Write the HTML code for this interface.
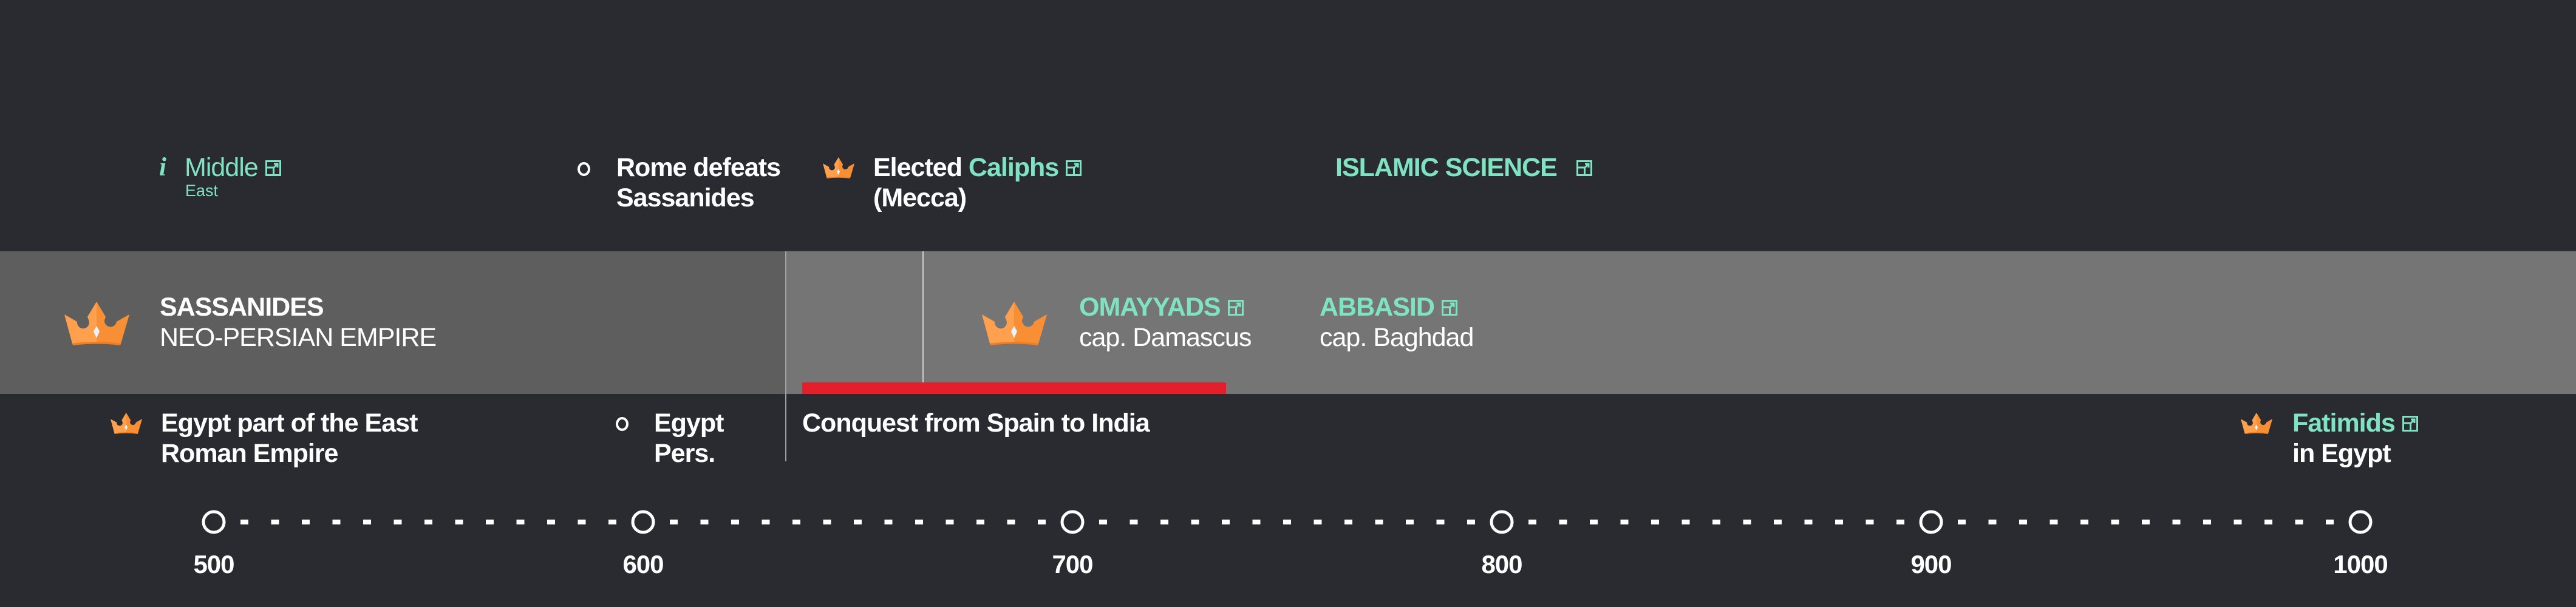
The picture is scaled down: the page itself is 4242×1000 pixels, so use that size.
<!DOCTYPE html>
<html><head><meta charset="utf-8"><style>
*{margin:0;padding:0;box-sizing:border-box}
html,body{width:4242px;height:1000px;background:#2a2b30;overflow:hidden}
body{position:relative;font-family:"Liberation Sans",Arial,sans-serif;color:#fff}
.t{position:absolute;font-size:43px;line-height:50px;white-space:nowrap;letter-spacing:-1px}
.b{font-weight:bold}
.g{color:#7fe3c1}
.ext{display:inline-block;width:26px;height:26px;vertical-align:0px;margin-left:12px}
.crown{position:absolute}
.bul{position:absolute;width:21px;height:23px;border:4px solid #fff;border-radius:50%}
.yr{position:absolute;top:906px;font-size:42px;font-weight:bold;width:200px;text-align:center;letter-spacing:-1px}
</style></head><body>
<svg width="0" height="0" style="position:absolute">
<defs>
<symbol id="cr" viewBox="0 0 107 72">
<path d="M0,21 L21,33 A10,10 0 1 0 40,30 L38,25 L53,0 L68,25 L66,30 A10,10 0 1 0 86,33 L107,21 L93,69 Q53,64 13,69 Z" fill="#ffa04e"/>
<path d="M53,0 L68,25 L66,30 A10,10 0 1 0 86,33 L107,21 L93,69 Q73,66 53,66 Z" fill="#f88f34"/>
<path d="M13,69 Q53,63 93,69 L92,72 Q53,67 14,72 Z" fill="#ec7f25"/>
<path d="M53,40 L58,49 L53,60 L48,49 Z" fill="#eaf2fb"/>
</symbol>
<symbol id="ex" viewBox="0 0 26 26">
<rect x="1.5" y="1.5" width="23" height="23" fill="none" stroke="#7fe3c1" stroke-width="3"/>
<rect x="1.5" y="12" width="12" height="12.5" fill="none" stroke="#7fe3c1" stroke-width="3"/>
<path d="M13 13 L20 6 M14 6 H20 V12" fill="none" stroke="#7fe3c1" stroke-width="3"/>
</symbol>
</defs></svg>

<div style="position:absolute;left:0;top:414px;width:4242px;height:235px;background:#757575"></div>
<div style="position:absolute;left:0;top:414px;width:1293px;height:235px;background:#5f5e5f"></div>
<div style="position:absolute;left:1293px;top:414px;width:2px;height:346px;background:#a0a0a0"></div>
<div style="position:absolute;left:1519px;top:414px;width:2px;height:217px;background:#cfcfcf"></div>
<div style="position:absolute;left:1321px;top:630px;width:698px;height:19px;background:#e3202a"></div>

<div class="t g" style="left:262px;top:251px;font-family:'Liberation Serif',serif;font-style:italic;font-weight:bold">i</div>
<div class="t g" style="left:304px;top:251px">Middle<svg class="ext"><use href="#ex"/></svg></div>
<div class="t g" style="left:305px;top:296px;font-size:27px;line-height:36px;letter-spacing:0">East</div>

<div class="bul" style="left:951px;top:267px"></div>
<div class="t b" style="left:1015px;top:251px">Rome defeats<br>Sassanides</div>

<svg class="crown" style="left:1355px;top:259px" width="52" height="35"><use href="#cr"/></svg>
<div class="t b" style="left:1438px;top:251px">Elected <span class="g">Caliphs</span><svg class="ext"><use href="#ex"/></svg><br>(Mecca)</div>

<div class="t b g" style="left:2199px;top:251px">ISLAMIC SCIENCE<svg class="ext" style="margin-left:32px"><use href="#ex"/></svg></div>

<svg class="crown" style="left:106px;top:497px" width="107" height="72"><use href="#cr"/></svg>
<div class="t" style="left:263px;top:481px"><span class="b">SASSANIDES</span><br>NEO-PERSIAN EMPIRE</div>

<svg class="crown" style="left:1617px;top:497px" width="107" height="72"><use href="#cr"/></svg>
<div class="t" style="left:1777px;top:481px"><span class="b g">OMAYYADS</span><svg class="ext"><use href="#ex"/></svg><br>cap. Damascus</div>
<div class="t" style="left:2173px;top:481px"><span class="b g">ABBASID</span><svg class="ext"><use href="#ex"/></svg><br>cap. Baghdad</div>

<svg class="crown" style="left:182px;top:680px" width="52" height="35"><use href="#cr"/></svg>
<div class="t b" style="left:265px;top:672px">Egypt part of the East<br>Roman Empire</div>

<div class="bul" style="left:1014px;top:687px"></div>
<div class="t b" style="left:1077px;top:672px">Egypt<br>Pers.</div>

<div class="t b" style="left:1321px;top:672px">Conquest from Spain to India</div>

<svg class="crown" style="left:3690px;top:680px" width="52" height="35"><use href="#cr"/></svg>
<div class="t b" style="left:3775px;top:672px"><span class="g">Fatimids</span><svg class="ext"><use href="#ex"/></svg><br>in Egypt</div>

<svg style="position:absolute;left:0;top:830px" width="4242" height="60">
<line x1="352" y1="30" x2="3887" y2="30" stroke="#fff" stroke-width="8" stroke-dasharray="13 37.5" stroke-dashoffset="6.5"/>
<g fill="#2a2b30" stroke="#fff" stroke-width="5">
<circle cx="352" cy="30" r="17"/><circle cx="1059" cy="30" r="17"/><circle cx="1766" cy="30" r="17"/>
<circle cx="2473" cy="30" r="17"/><circle cx="3180" cy="30" r="17"/><circle cx="3887" cy="30" r="17"/>
</g></svg>
<div class="yr" style="left:252px">500</div>
<div class="yr" style="left:959px">600</div>
<div class="yr" style="left:1666px">700</div>
<div class="yr" style="left:2373px">800</div>
<div class="yr" style="left:3080px">900</div>
<div class="yr" style="left:3787px">1000</div>
</body></html>
